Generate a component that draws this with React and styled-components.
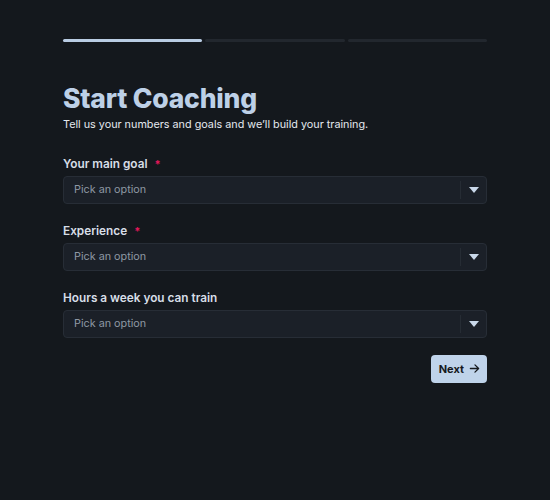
import React from "react";
import styled, { createGlobalStyle } from "styled-components";

const Global = createGlobalStyle`
  html, body { margin: 0; padding: 0; background: #14181d; }
  body { font-family: Inter, "Noto Sans", sans-serif; }
  * { box-sizing: border-box; }
`;

const Page = styled.div`
  width: 550px;
  height: 500px;
  background: #14181d;
  padding: 39px 63px 0;
`;

const Steps = styled.div`
  display: grid;
  grid-template-columns: repeat(3, 1fr);
  gap: 3px;
  margin-bottom: 40px;
`;

const Step = styled.div`
  height: 3px;
  border-radius: 2px;
  background: ${(p) => (p.$active ? "#b9cce3" : "#22272e")};
`;

const Title = styled.h1`
  margin: 0;
  font-size: 26.5px;
  line-height: 32px;
  font-weight: 800;
  color: #bdd0e7;
  letter-spacing: -0.2px;
`;

const Subtitle = styled.p`
  margin: 3px 0 22.5px;
  font-size: 10.8px;
  line-height: 16px;
  color: #e4e9ef;
`;

const Field = styled.div`
  display: flex;
  flex-direction: column;
  gap: 4px;
  margin-bottom: 19px;
`;

const Label = styled.label`
  display: flex;
  align-items: center;
  gap: 7px;
  font-size: 11.8px;
  line-height: 16px;
  font-weight: 600;
  color: #d7dee7;
`;

const Required = styled.span`
  color: #e3175b;
  font-size: 11px;
  font-weight: 700;
`;

const Select = styled.div`
  display: flex;
  align-items: stretch;
  height: 28px;
  background: #1b2028;
  border: 1px solid #272d36;
  border-radius: 4px;
`;

const Placeholder = styled.span`
  flex: 1;
  display: flex;
  align-items: center;
  padding-left: 10px;
  font-size: 10.8px;
  color: #8e98a4;
`;

const Caret = styled.span`
  width: 26px;
  display: flex;
  align-items: center;
  justify-content: center;
  border-left: 1px solid #262c34;
  margin: 4px 0;
`;

const Actions = styled.div`
  display: flex;
  justify-content: flex-end;
  margin-top: -2px;
`;

const Button = styled.button`
  display: flex;
  align-items: center;
  gap: 5px;
  height: 28px;
  padding: 0 7px 0 8px;
  border: none;
  border-radius: 4px;
  background: #bfd3ea;
  color: #15191e;
  font-family: inherit;
  font-size: 11px;
  font-weight: 700;
`;

const Triangle = () => (
  <svg width="10" height="6" viewBox="0 0 10 6">
    <path d="M0 0h10L5 6z" fill="#c9d8ea" />
  </svg>
);

const Arrow = () => (
  <svg width="11" height="11" viewBox="0 0 12 12" fill="none" stroke="#15191e" strokeWidth="1.4" strokeLinecap="round" strokeLinejoin="round">
    <path d="M1.5 6h9M6.5 2l4 4-4 4" />
  </svg>
);

const fields = [
  { label: "Your main goal", required: true },
  { label: "Experience", required: true },
  { label: "Hours a week you can train", required: false },
];

export default function App() {
  return (
    <Page>
      <Global />
      <Steps>
        <Step $active />
        <Step />
        <Step />
      </Steps>
      <Title>Start Coaching</Title>
      <Subtitle>Tell us your numbers and goals and we’ll build your training.</Subtitle>
      {fields.map((f) => (
        <Field key={f.label}>
          <Label>
            {f.label}
            {f.required && <Required>*</Required>}
          </Label>
          <Select>
            <Placeholder>Pick an option</Placeholder>
            <Caret>
              <Triangle />
            </Caret>
          </Select>
        </Field>
      ))}
      <Actions>
        <Button>
          Next
          <Arrow />
        </Button>
      </Actions>
    </Page>
  );
}
